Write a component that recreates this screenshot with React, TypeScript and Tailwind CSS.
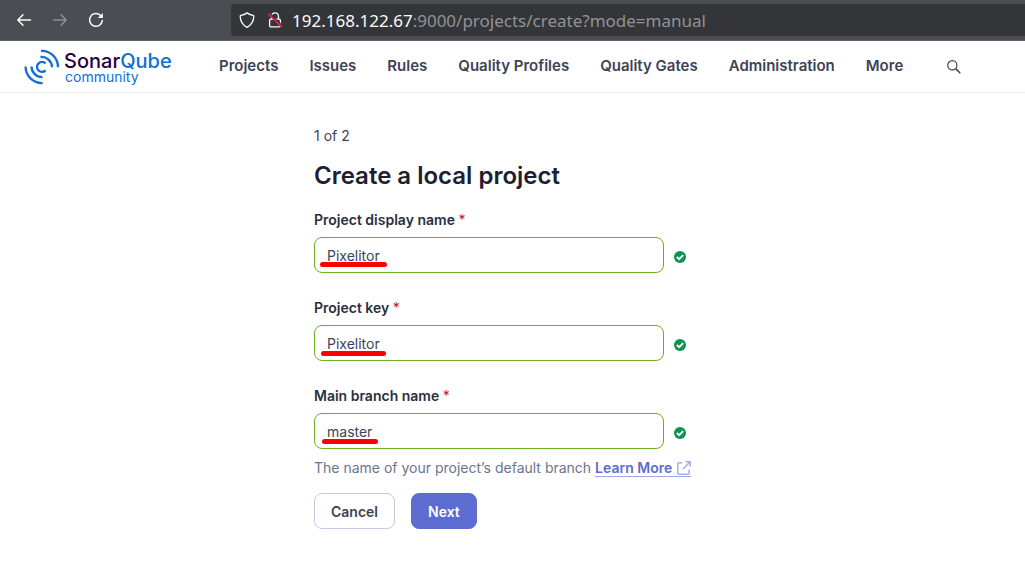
import { useState } from "react";

const NAV_ITEMS = [
  "Projects",
  "Issues",
  "Rules",
  "Quality Profiles",
  "Quality Gates",
  "Administration",
  "More",
];

function BrowserBar() {
  return (
    <div className="flex h-[41px] items-center border-b border-[#5f6166] bg-[#4a4d51] text-[#fbfbfe]">
      <div className="flex w-[231px] shrink-0 items-center gap-5 pl-4">
        <button type="button" aria-label="Back">
          <svg width="16" height="16" viewBox="0 0 16 16" fill="none" stroke="currentColor" strokeWidth="1.5" strokeLinecap="round" strokeLinejoin="round">
            <path d="M14.5 8H2M7 2.8 1.8 8 7 13.2" />
          </svg>
        </button>
        <button type="button" aria-label="Forward" className="text-[#8f9194]" disabled>
          <svg width="16" height="16" viewBox="0 0 16 16" fill="none" stroke="currentColor" strokeWidth="1.5" strokeLinecap="round" strokeLinejoin="round">
            <path d="M1.5 8H14M9 2.8 14.2 8 9 13.2" />
          </svg>
        </button>
        <button type="button" aria-label="Reload">
          <svg width="16" height="16" viewBox="0 0 16 16" fill="none" stroke="currentColor" strokeWidth="1.5" strokeLinecap="round">
            <path d="M14.3 8.6A6.4 6.4 0 1 1 12.4 3.3" />
            <path d="M14.9 1v4.6a.5.5 0 0 1-.5.5H9.8z" fill="currentColor" stroke="none" />
          </svg>
        </button>
      </div>
      <div className="flex h-8 grow items-center gap-3 rounded-l bg-[#343539] pl-2">
        <svg width="16" height="16" viewBox="0 0 16 16" fill="none" stroke="currentColor" strokeWidth="1.3" strokeLinejoin="round">
          <path d="M8 .9c1.8 1.3 3.9 2.1 6.1 2.4.4.1.7.4.7.8C14.8 9.3 12.3 13.1 8 15.3 3.7 13.1 1.2 9.3 1.2 4.1c0-.4.3-.7.7-.8C4.1 3 6.2 2.2 8 .9z" />
        </svg>
        <svg width="16" height="16" viewBox="0 0 16 16" fill="none" stroke="currentColor" strokeWidth="1.3">
          <path d="M4.5 7V4.3a3.5 3.5 0 0 1 7 0V7" />
          <rect x="2.6" y="7.2" width="10.8" height="7.7" rx="1.3" />
          <path d="M2.2 .8 15.8 14.4" stroke="#343539" strokeWidth="1.4" />
          <path d="M1.2 1.6 14.8 15.2" stroke="#e8204a" strokeWidth="1.7" />
        </svg>
        <span className="-ml-1 pt-0.5 pl-px font-['Noto_Sans',sans-serif] text-[17px] leading-6 text-[#919295]">
          <span className="text-[#fbfbfe]">192.168.122.67</span>:9000/projects/create?mode=manual
        </span>
      </div>
    </div>
  );
}

function Logo() {
  return (
    <a href="#home" aria-label="SonarQube community" className="flex w-[151px] shrink-0 items-center gap-1">
      <svg width="36" height="36" viewBox="0 0 36 36" fill="none" stroke="#126ed3" strokeWidth="2.3" className="shrink-0">
        <path d="M21.6 14.4a5 5 0 1 0 0 7" />
        <path d="M16.5 8a10.4 10.4 0 0 1 11.5 10.3" />
        <path d="M17 1.9a16.2 16.2 0 0 1 17 16.3" />
        <path d="M7.5 17.5a10.6 10.6 0 0 0 11 10.6" />
        <path d="M1.6 17.5a16.4 16.4 0 0 0 17 16.6" />
      </svg>
      <span className="flex flex-col pt-1">
        <span className="text-xl leading-[15px] font-medium text-[#290042]">
          Sonar<span className="text-[#126ed3]">Qube</span>
        </span>
        <span className="pl-px text-sm leading-[15px] text-[#126ed3]">community</span>
      </span>
    </a>
  );
}

function Header() {
  return (
    <header className="flex h-[52px] items-center border-b border-[#ebebeb] bg-white pl-6">
      <Logo />
      <nav className="ml-11 flex items-center gap-[31px] pb-0.5 text-[15px] leading-5 font-semibold text-[#3e4357]">
        {NAV_ITEMS.map((item) => (
          <a key={item} href="#nav" className="whitespace-nowrap">
            {item}
          </a>
        ))}
      </nav>
      <button type="button" aria-label="Search" className="ml-11 text-[#3e4357]">
        <svg width="14" height="14" viewBox="0 0 14 14" fill="none" stroke="currentColor" strokeWidth="1.2">
          <circle cx="5.3" cy="5.3" r="4.6" />
          <path d="M8.6 8.6 13.3 13.3" strokeWidth="1.5" />
        </svg>
      </button>
    </header>
  );
}

function CheckIcon() {
  return (
    <svg width="12" height="12" viewBox="0 0 12 12" fill="none" className="mt-1 shrink-0">
      <circle cx="6" cy="6" r="6" fill="#0b9150" />
      <path d="M2.8 5.9 5.1 8.2 9.2 4.1" stroke="white" strokeWidth="2" />
    </svg>
  );
}

interface FieldProps {
  id: string;
  label: string;
  initial: string;
  markClass: string;
}

function Field({ id, label, initial, markClass }: FieldProps) {
  const [value, setValue] = useState(initial);
  return (
    <div>
      <label htmlFor={id} className="block font-semibold text-[#2a2f40]">
        {label} <span className="font-normal text-[#c01b1b]">*</span>
      </label>
      <div className="mt-[7px] flex items-center gap-2.5">
        <div className="relative w-[350px]">
          <input
            id={id}
            value={value}
            onChange={(event) => setValue(event.target.value)}
            className="block h-9 w-full rounded-lg border border-[#6cb11d] bg-white px-3 text-[#3e4357] outline-none"
          />
          <span className={`pointer-events-none absolute h-[5px] rounded-full bg-[#fd0000] ${markClass}`} />
        </div>
        <CheckIcon />
      </div>
    </div>
  );
}

export default function App() {
  return (
    <div className="min-h-screen bg-white font-['Inter',sans-serif] text-sm">
      <BrowserBar />
      <Header />
      <main className="mx-auto max-w-[397px] pt-[33px] pb-8">
        <p className="text-[#3e4357]">1 of 2</p>
        <h1 className="mt-3.5 text-2xl font-semibold text-[#1c2030]">Create a local project</h1>
        <form className="mt-4.5" onSubmit={(event) => event.preventDefault()}>
          <div className="flex flex-col gap-[25px]">
            <Field id="project-name" label="Project display name" initial="Pixelitor" markClass="top-[25px] left-1.5 w-[67px]" />
            <Field id="project-key" label="Project key" initial="Pixelitor" markClass="top-[26px] left-[7px] w-[65px]" />
            <Field id="main-branch" label="Main branch name" initial="master" markClass="top-[26px] left-2 w-14" />
          </div>
          <p className="mt-[9px] text-[#6a7590]">
            The name of your project’s default branch{" "}
            <a href="#learn-more" className="inline-flex items-center gap-[5px] border-b border-[#9da7e8] leading-[17px] font-semibold text-[#5d6cd0]">
              Learn More
              <svg width="14" height="14" viewBox="0 0 14 14" fill="none" stroke="#a5aeed" strokeWidth="1.5">
                <path d="M5.5 1.8H1.8a1 1 0 0 0-1 1v9.4a1 1 0 0 0 1 1h9.4a1 1 0 0 0 1-1V8.5M8.5.8h4.7v4.7M13 1 6 8" />
              </svg>
            </a>
          </p>
          <div className="mt-[15px] flex gap-4">
            <button type="button" className="h-9 rounded-lg border border-[#c5cbe0] bg-white px-4 pt-px font-semibold text-[#3e4357]">
              Cancel
            </button>
            <button type="submit" className="h-9 rounded-lg border border-[#5d6cd0] bg-[#5d6cd0] px-4 pt-px font-semibold text-white">
              Next
            </button>
          </div>
        </form>
      </main>
    </div>
  );
}
